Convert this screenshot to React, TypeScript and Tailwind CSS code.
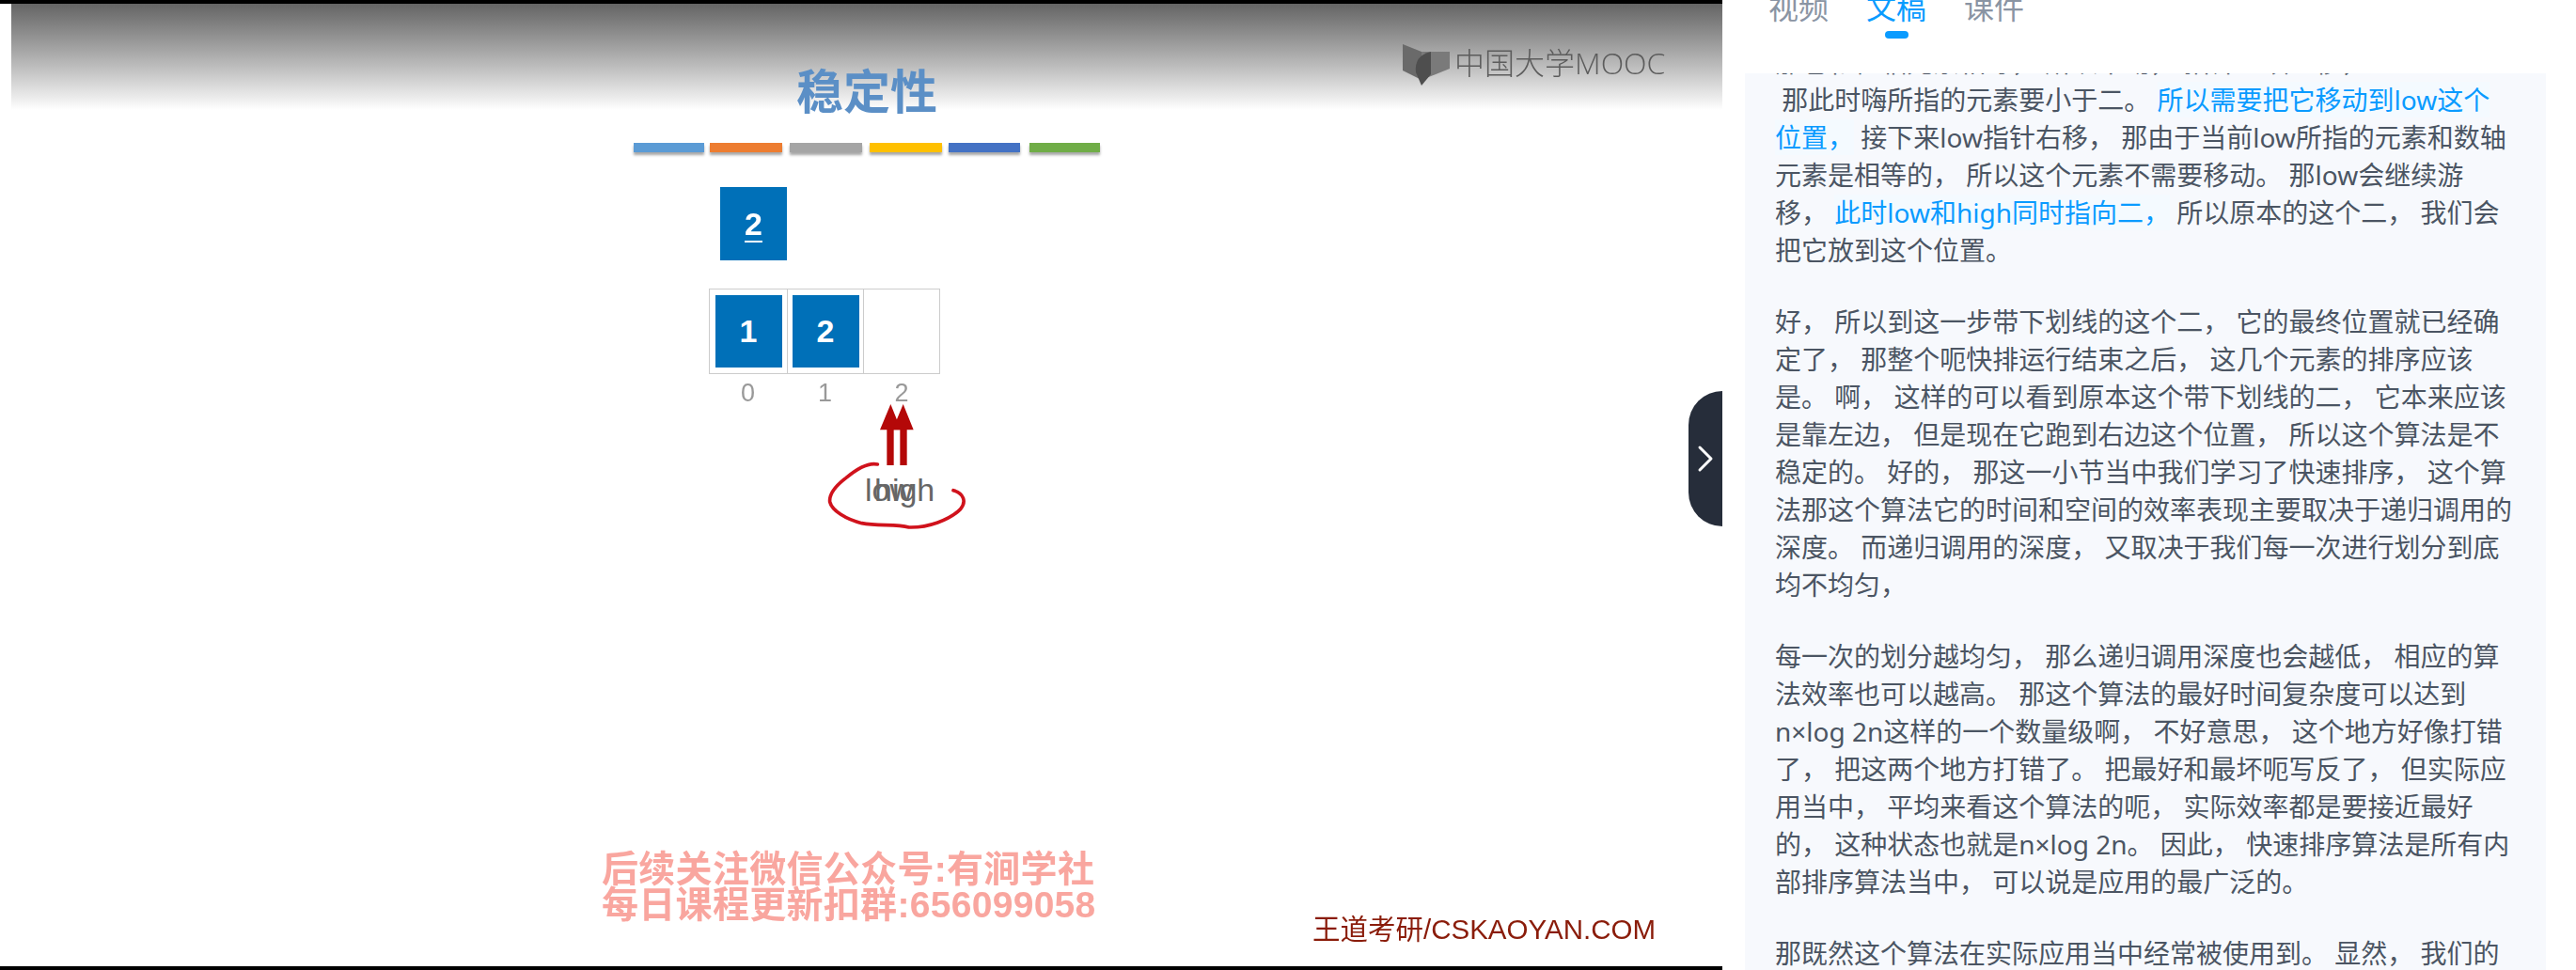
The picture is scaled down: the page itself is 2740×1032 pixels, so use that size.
import { ChevronRight } from "lucide-react";

const bars = [
  "w-[75px] mr-[6px] bg-[#5b9bd5]",
  "w-[77px] mr-[8px] bg-[#ed7d31]",
  "w-[77px] mr-[8px] bg-[#a5a5a5]",
  "w-[77px] mr-[7px] bg-[#ffc000]",
  "w-[76px] mr-[10px] bg-[#4472c4]",
  "w-[75px] bg-[#70ad47]",
];

function Blue({ children }: { children: string }) {
  return <span className="bg-[#f4faff] text-[#0a9bff]">{children}</span>;
}

function Slide() {
  return (
    <div className="relative flex h-[1032px] w-[1832px] shrink-0 flex-col overflow-hidden bg-white">
      <div className="h-1 shrink-0 bg-black" />
      <div className="ml-3 flex h-[113px] shrink-0 items-start bg-gradient-to-b from-[#656565] to-white">
        <h1 className="ml-[835px] mt-[60px] text-[50px] leading-[60px] font-bold text-[#5b8fc6] font-['Noto_Sans_CJK_SC',sans-serif] blur-[0.6px]">
          稳定性
        </h1>
        <div className="ml-[495px] mt-[43px] flex items-start blur-[0.7px]">
          <svg width="50" height="44" viewBox="0 0 50 44">
            <path d="M0 0 L20 8 L20 38 L0 28 Z" fill="#6a6a6a" />
            <path d="M20 8 L50 8 L50 26 L20 38 Z" fill="#7a7a7a" />
            <path d="M14 30 Q12 12 30 8 L30 32 L20 44 Z" fill="#4e4e4e" />
          </svg>
          <span className="ml-[5px] text-[32px] leading-[40px] font-light text-[#5c5c5c] font-['Open_Sans','Noto_Sans_CJK_SC',sans-serif]">
            中国大学MOOC
          </span>
        </div>
      </div>

      <div className="ml-[674px] mt-[35px] flex shrink-0 blur-[0.4px]">
        {bars.map((b) => (
          <div key={b} className={`h-[10px] shadow-[0_3px_3px_rgba(0,0,0,0.35)] ${b}`} />
        ))}
      </div>

      <div className="ml-[766px] mt-[37px] flex h-[78px] w-[71px] shrink-0 items-center justify-center bg-[#0070b8] text-[34px] font-bold text-white underline decoration-2 underline-offset-[6px] font-['Liberation_Sans',sans-serif] blur-[0.3px]">
        2
      </div>

      <div className="ml-[754px] mt-[30px] flex h-[91px] w-[246px] shrink-0 border border-[#cccccc] text-[34px] font-bold text-white font-['Liberation_Sans',sans-serif]">
        <div className="flex w-[83px] items-center justify-center border-r border-[#cccccc]">
          <div className="flex h-[77px] w-[71px] items-center justify-center bg-[#0070b8]">1</div>
        </div>
        <div className="flex w-[81px] items-center justify-center border-r border-[#cccccc]">
          <div className="flex h-[77px] w-[71px] items-center justify-center bg-[#0070b8]">2</div>
        </div>
        <div className="flex-1" />
      </div>

      <div className="ml-[754px] mt-[5px] flex w-[246px] shrink-0 text-[27px] leading-[30px] text-[#999999] font-['Liberation_Sans',sans-serif] blur-[0.3px]">
        <span className="w-[83px] text-center">0</span>
        <span className="w-[81px] text-center">1</span>
        <span className="w-[82px] text-center">2</span>
      </div>

      <div className="ml-[640px] mt-[473px] shrink-0 text-[39px] leading-[38px] font-bold tracking-[0.3px] text-[#f9a69f] font-['Liberation_Sans','Noto_Sans_CJK_SC',sans-serif] blur-[0.5px]">
        <div>后续关注微信公众号:有涧学社</div>
        <div>每日课程更新扣群:656099058</div>
      </div>

      <div className="ml-[1396px] -mt-[10px] shrink-0 text-[29.5px] leading-[34px] text-[#8a1c0a] font-['Liberation_Sans','Noto_Sans_CJK_SC',sans-serif] blur-[0.3px]">
        王道考研/CSKAOYAN.COM
      </div>
      <div className="mt-auto h-1 shrink-0 bg-black" />

      {/* arrows and the pen scribble sit over the slide */}
      <svg className="absolute left-[700px] top-[180px]" width="400" height="400" viewBox="0 0 1200 1200" fill="none">
        <path d="M742 750 L775 832 L752 832 L752 945 L730 945 L730 832 L708 832 Z" fill="#b40808" />
        <path d="M782 750 L815 832 L794 832 L794 945 L772 945 L772 832 L748 832 Z" fill="#b40808" />
        <path
          d="M700 942 C670 935 630 960 600 985 C570 1008 545 1035 548 1062 C555 1090 600 1118 650 1130 C700 1140 760 1132 800 1143 C860 1145 930 1120 965 1085 C985 1060 975 1035 942 1025"
          stroke="#d0121c"
          strokeWidth="11"
          strokeLinecap="round"
        />
      </svg>
      <span className="absolute left-[920px] top-[501px] text-[34px] leading-[40px] text-[#666666] font-['Liberation_Sans',sans-serif]">
        low
      </span>
      <span className="absolute left-[930px] top-[501px] text-[34px] leading-[40px] text-[#666666] font-['Liberation_Sans',sans-serif]">
        high
      </span>

      <button className="absolute right-0 top-[416px] flex h-[144px] w-9 items-center justify-center rounded-l-[36px] bg-[#262d3a] text-white">
        <ChevronRight className="h-12 w-12 shrink-0" strokeWidth={1.5} />
      </button>
    </div>
  );
}

export default function App() {
  return (
    <div className="flex h-[1032px] w-[2740px] overflow-hidden bg-white font-['Noto_Sans','Noto_Sans_CJK_SC',sans-serif]">
      <Slide />
      <div className="ml-6 flex w-[852px] shrink-0 flex-col">
        <div className="flex h-[78px] shrink-0 gap-10 overflow-hidden pl-[25px]">
          <div className="-mt-[12px] text-[32px] leading-[40px] text-[#8a94a3]">视频</div>
          <div className="-mt-[12px] flex h-[55px] flex-col items-center text-[32px] leading-[40px] text-[#0a9bff]">
            文稿
            <div className="mt-[5px] h-2 w-[25px] rounded-full bg-[#0a9bff]" />
          </div>
          <div className="-mt-[12px] text-[32px] leading-[40px] text-[#8a94a3]">课件</div>
        </div>
        <div className="flex-1 overflow-hidden bg-[#f7f9fd] pl-8 pr-[35px] text-[28px] leading-[40px] text-[#4b5563]">
          <p className="-mt-[32px] mb-[36px] whitespace-pre-wrap">
            {"那它和枢轴元素相等， 所以不动， 指针继续左移， \n 那此时嗨所指的元素要小于二。 "}
            <Blue>所以需要把它移动到low这个位置，</Blue>
            {" 接下来low指针右移， 那由于当前low所指的元素和数轴元素是相等的， 所以这个元素不需要移动。 那low会继续游移， "}
            <Blue>此时low和high同时指向二，</Blue>
            {" 所以原本的这个二， 我们会把它放到这个位置。"}
          </p>
          <p className="mb-[36px] whitespace-pre-wrap">
            好， 所以到这一步带下划线的这个二， 它的最终位置就已经确定了， 那整个呃快排运行结束之后， 这几个元素的排序应该是。 啊， 这样的可以看到原本这个带下划线的二， 它本来应该是靠左边， 但是现在它跑到右边这个位置， 所以这个算法是不稳定的。 好的， 那这一小节当中我们学习了快速排序， 这个算法那这个算法它的时间和空间的效率表现主要取决于递归调用的深度。 而递归调用的深度， 又取决于我们每一次进行划分到底均不均匀，
          </p>
          <p className="mb-[36px] whitespace-pre-wrap">
            每一次的划分越均匀， 那么递归调用深度也会越低， 相应的算法效率也可以越高。 那这个算法的最好时间复杂度可以达到n×log 2n这样的一个数量级啊， 不好意思， 这个地方好像打错了， 把这两个地方打错了。 把最好和最坏呃写反了， 但实际应用当中， 平均来看这个算法的呃， 实际效率都是要接近最好的， 这种状态也就是n×log 2n。 因此， 快速排序算法是所有内部排序算法当中， 可以说是应用的最广泛的。
          </p>
          <p className="whitespace-pre-wrap">那既然这个算法在实际应用当中经常被使用到。 显然， 我们的</p>
        </div>
      </div>
    </div>
  );
}
